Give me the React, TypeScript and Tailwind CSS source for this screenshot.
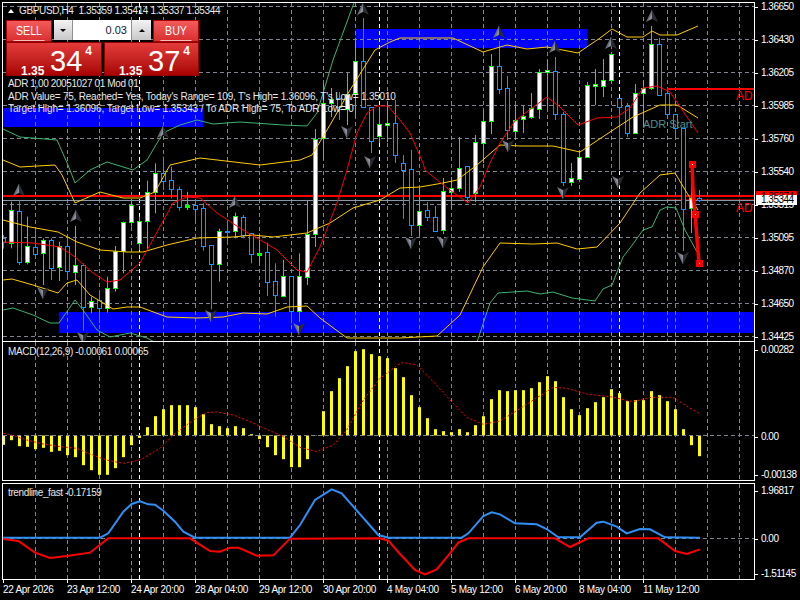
import React from "react";

type C = [number, number, number, number, number];
// [bull=1 / bear=0, wickTop, bodyTop, bodyBottom, wickBottom] in page pixels
const z3 = (v: number) => 170 + v / 3;
const left: C[] = [
  [0,195,205,218,236],[1,95,120,218,235],[0,90,124,278,285],[1,140,229,278,283],[0,178,230,250,265],
  [1,205,210,248,345],[0,205,210,293,330],[1,215,229,293,333],[0,195,229,305,330],[1,168,286,308,345],
  [0,280,286,413,482],[1,380,393,410,430],[0,362,391,416,460],[1,320,355,416,428],[1,228,244,355,365],
  [1,155,157,245,310],[1,88,105,157,170],[1,140,154,220,240],[1,32,67,154,240],[1,-20,10,67,130],
  [0,-40,10,35,60],[0,-10,30,58,85],[0,50,58,112,122],[1,65,105,110,120],[0,90,105,116,158],
  [0,100,115,228,242],[0,225,226,284,418],[1,176,184,284,335],[0,150,184,188,225],[1,128,139,185,205],
  [0,135,142,195,205],[0,190,190,252,280],[1,190,250,255,278],[0,218,246,335,378],[0,280,334,377,440],
  [1,270,319,378,380],[0,318,319,425,460],[1,250,319,425,455],[1,92,192,320,345],
];
const right: C[] = [
  [1,129,139,234,247],[1,83,103,138,160],[1,88,99,103,117],[0,92,98,107,120],[1,73,94,109,125],
  [1,42,61,93,117],[0,18,61,107,108],[0,107,107,141,153],[1,107,124,136,143],[1,103,123,125,142],
  [0,100,123,155,163],[0,155,163,170,219],[0,150,169,225,236],[1,188,211,225,235],[0,202,210,217,221],
  [0,206,217,231,232],[1,178,191,230,234],[1,177,188,192,208],[1,137,168,188,192],[0,166,166,197,202],
  [1,135,142,193,202],[1,111,121,143,163],[1,54,66,121,134],[0,41,66,89,94],[0,76,88,130,140],
  [1,105,120,131,140],[1,106,116,119,133],[1,93,108,117,119],[1,69,72,109,119],[1,60,70,72,108],
  [0,57,71,114,120],[0,112,114,182,186],[1,163,178,182,186],[1,150,157,179,180],[1,82,85,157,158],
  [1,69,84,86,105],[1,59,80,86,97],[1,54,54,80,82],[0,98,98,107,170],[0,103,106,133,137],
  [1,84,93,133,134],[1,80,88,93,127],[1,26,44,88,90],[0,38,44,95,96],[0,90,93,114,115],
  [0,114,114,128,137],[0,128,128,209,251],[1,175,198,208,233],[0,190,198,200,202],
];
const candles: C[] = [
  ...left.map(([t, a, b, c, d]): C => [t, z3(a), z3(b), z3(c), z3(d)]),
  ...right,
];

const macd = [
  -28,-14,-32,-34,-41,-37,-49,-46,-59,-65,-89,-104,-118,-118,-98,-65,-29,-7,25,58,79,91,91,91,85,64,34,28,22,28,22,4,
  -11,-35,-59,-71,-95,-95,-71,1,73,133,172,208,253,259,244,238,232,202,175,121,85,52,19,13,10,19,10,31,58,109,136,133,
  136,136,142,160,178,163,115,79,61,82,100,115,139,127,103,106,106,133,121,103,79,19,-29,-62,
];

const pts = (a: number[][]) => a.map((p) => p.join(",")).join(" ");
const zm = (a: number[][], ox: number, oy: number, off = 0) =>
  a.map(([x, y]) => [(x + off) / 3 + ox, y / 3 + oy]);

const yUp = [[3,160],[20,167],[55,165],[62,175],[75,203],[100,192],[123,198],[140,198],[155,192],[170,165],[200,158],[260,165],[300,160],[312,155],[330,125],[350,90],[375,50],[390,42],[400,38],[453,38],[483,52],[507,45],[527,49],[547,47],[578,53],[600,38],[612,29],[627,37],[643,37],[652,31],[660,35],[677,35],[698,26]];
const yMid = [[3,220],[30,227],[58,232],[77,242],[100,250],[127,252],[143,252],[167,245],[197,238],[233,237],[253,235],[273,237],[307,233],[330,223],[353,208],[380,200],[400,188],[420,187],[443,183],[457,180],[477,165],[500,145],[520,146],[553,146],[580,152],[610,132],[633,117],[660,105],[677,105],[698,118]];
const yLow = [[3,280],[12,279],[33,285],[58,293],[67,283],[77,280],[90,295],[113,309],[127,307],[140,307],[167,317],[197,318],[223,317],[243,313],[267,314],[287,307],[307,306],[320,318],[347,338],[400,338],[437,336],[460,315],[483,267],[500,243],[533,244],[557,243],[577,249],[597,247],[620,223],[640,193],[660,175],[675,173],[687,193],[698,210]];
const gUp = [[3,129],[20,137],[57,140],[68,165],[75,183],[90,170],[107,162],[133,170],[147,160],[163,133],[180,125],[197,120],[213,124],[240,122],[283,125],[307,126],[317,113],[333,60],[355,0]];
const gUp2 = [[572,-2],[578,3],[584,-2]];
const gLow = [[3,310],[13,308],[33,315],[50,323],[59,323],[75,300],[83,310],[97,330],[110,337],[130,333],[147,338],[160,345]];
const gLow2 = [[476,345],[490,303],[498,293],[527,291],[540,294],[553,292],[572,298],[595,301],[603,289],[612,285],[623,257],[630,248],[643,230],[652,227],[660,210],[667,207],[676,208],[685,230],[697,252]];
const red = [[3,242],[33,243],[60,247],[75,257],[93,273],[107,282],[120,280],[140,263],[173,203],[187,197],[200,198],[217,213],[243,230],[257,238],[277,250],[297,270],[307,272],[320,247],[337,203],[347,170],[357,133],[367,113],[377,106],[388,106],[400,120],[410,133],[423,163],[425,170],[447,188],[468,203],[480,187],[490,163],[500,143],[515,121],[532,108],[547,97],[560,107],[578,125],[597,118],[617,117],[630,108],[643,88],[657,86],[670,92],[687,117],[698,133]];

const sigA = [[10,280],[35,285],[80,300],[130,312],[180,320],[230,325],[265,340],[320,360],[370,370],[420,360],[480,325],[520,285],[580,240],[620,218],[650,216],[700,225],[750,245],[800,268],[850,290],[900,322],[950,335],[1000,315],[1040,270],[1090,180],[1140,115],[1200,70]];
const sigB = [[10,68],[50,75],[100,125],[150,180],[200,232],[250,253],[300,243],[350,212],[400,180],[460,142],[500,145],[560,162],[630,170],[700,185],[750,172],[820,172],[870,205],[898,220]];
const signal = [...zm(sigA, 0, 340), ...zm(sigB, 400, 340)];

const blueA = [[10,173],[300,173],[325,160],[370,95],[395,72],[420,64],[445,73],[465,74],[490,92],[525,125],[550,155],[585,173],[870,173],[900,135],[945,60],[995,28],[1025,40],[1135,165],[1165,173]];
const blueB = [[0,173],[185,173],[205,160],[250,108],[275,97],[300,103],[345,130],[410,133],[440,147],[475,172],[540,172],[590,128],[610,125],[650,140],[680,160],[720,147],[750,148],[795,172],[900,173]];
const redA = [[10,177],[55,183],[105,218],[150,234],[200,228],[270,218],[325,175],[570,175],[630,213],[660,215],[690,203],[715,203],[770,227],[820,226],[870,176],[1140,175],[1165,182],[1200,222]];
const redB = [[0,222],[45,270],[75,283],[110,268],[150,220],[175,188],[205,175],[465,175],[510,201],[565,175],[775,175],[825,213],[860,222],[900,208]];

const vx = Array.from({ length: 23 }, (_, i) => 35 + 32 * i);
const whiteX = [139, 379, 619];
const GRID = "#7d8590";

function VGrid({ y1, y2 }: { y1: number; y2: number }) {
  return (
    <g>
      {vx.map((x) => (
        <line key={x} x1={x + 0.5} x2={x + 0.5} y1={y1} y2={y2} stroke={GRID} strokeDasharray="4 3" />
      ))}
      {whiteX.map((x) => (
        <line key={x} x1={x + 0.5} x2={x + 0.5} y1={y1} y2={y2} stroke="#ffffff" strokeDasharray="4 3" />
      ))}
    </g>
  );
}

function UpArrow({ x, y }: { x: number; y: number }) {
  return (
    <g transform={`translate(${x} ${y})`}>
      <polygon points="0,-6.5 -6,6 0,3" fill="#6c7078" />
      <polygon points="0,-6.5 6,6 0,3" fill="#2c2c30" />
      <polygon points="0,-3 -3,4 0,2.5" fill="#8c94a4" />
    </g>
  );
}
function DownArrow({ x, y }: { x: number; y: number }) {
  return (
    <g transform={`translate(${x} ${y})`}>
      <polygon points="0,6.5 -6,-6 0,-3" fill="#6c7078" />
      <polygon points="0,6.5 6,-6 0,-3" fill="#2c2c30" />
      <polygon points="0,3 -3,-4 0,-2.5" fill="#8c94a4" />
    </g>
  );
}

function Marker({ x, y }: { x: number; y: number }) {
  return (
    <g>
      <rect x={x - 3} y={y - 3} width={7} height={7} fill="#ff0000" />
      <rect x={x} y={y} width={1} height={1} fill="#ffffff" />
    </g>
  );
}

function Candle({ k, c }: { k: number; c: C }) {
  const x = 3 + 8 * k;
  const [bull, wt, bt, bb, wb] = c;
  const col = bull ? "#00ff00" : "#1e90ff";
  const thin = bb - bt < 2;
  return (
    <g>
      <line x1={x + 0.5} x2={x + 0.5} y1={wt} y2={wb} stroke={col} />
      <rect
        x={x - 1.5}
        y={Math.round(bt) + 0.5}
        width={4}
        height={Math.max(1, Math.round(bb - bt))}
        fill={thin ? col : bull ? "#ffffff" : "#000000"}
        stroke={col}
      />
    </g>
  );
}

function MainChart() {
  const hy = [6, 39, 72, 105, 138, 171, 204, 237, 270, 303, 336];
  return (
    <svg className="block w-full h-full" viewBox="3 3 751 338">
      <rect x={355} y={29} width={232} height={19} fill="#0000ff" />
      <rect x={3} y={108} width={200} height={19} fill="#0000ff" />
      <rect x={59} y={312} width={695} height={21} fill="#0000ff" />
      {hy.map((y) => (
        <line key={y} x1={3} x2={754} y1={y + 0.5} y2={y + 0.5} stroke={GRID} strokeDasharray="4 3" />
      ))}
      <VGrid y1={3} y2={341} />
      <line x1={667.5} x2={667.5} y1={3} y2={341} stroke={GRID} strokeDasharray="4 3" />
      <line x1={3} x2={754} y1={196} y2={196} stroke="#ff0000" strokeWidth={2} />
      <line x1={3} x2={754} y1={200.5} y2={200.5} stroke="#8a99a8" />
      <line x1={667} x2={754} y1={199.5} y2={199.5} stroke="#ff0000" strokeOpacity={0.55} />
      <line x1={667} x2={754} y1={89} y2={89} stroke="#ff0000" strokeWidth={2} />
      {candles.map((c, k) => (
        <Candle key={k} k={k} c={c} />
      ))}
      <polyline points={pts(gUp)} fill="none" stroke="#3cb371" />
      <polyline points={pts(gUp2)} fill="none" stroke="#3cb371" />
      <polyline points={pts(gLow)} fill="none" stroke="#3cb371" />
      <polyline points={pts(gLow2)} fill="none" stroke="#3cb371" />
      <polyline points={pts(yUp)} fill="none" stroke="#ffcc00" />
      <polyline points={pts(yMid)} fill="none" stroke="#ffcc00" />
      <polyline points={pts(yLow)} fill="none" stroke="#ffcc00" />
      <polyline points={pts(red)} fill="none" stroke="#ff0000" />
      {[[363,9],[163,132],[499,32],[555,47],[611,43],[652,16],[19,190],[76,216],[235,202]].map(([x, y]) => (
        <UpArrow key={`${x}`} x={x} y={y} />
      ))}
      {[[347,132],[370,162],[508,146],[43,293],[211,316],[299,329],[83,338],[411,243],[443,242],[563,193],[618,182],[683,258]].map(([x, y]) => (
        <DownArrow key={`${x}`} x={x} y={y} />
      ))}
      <polyline points="692,164 693,190 695,214 699,263" fill="none" stroke="#ff0000" strokeWidth={3.5} />
      <Marker x={692} y={164} />
      <Marker x={695} y={214} />
      <Marker x={699} y={263} />
    </svg>
  );
}

function MacdChart() {
  return (
    <svg className="block w-full h-full" viewBox="3 342 751 138">
      <VGrid y1={342} y2={480} />
      {macd.map((v, k) => {
        const h = Math.abs(v) / 3;
        return (
          <rect key={k} x={2 + 8 * k} y={v > 0 ? 435.5 - h : 435.5} width={3} height={h} fill="#ffff00" />
        );
      })}
      <line x1={3} x2={754} y1={435.5} y2={435.5} stroke={GRID} strokeDasharray="4 3" />
      <polyline points={pts(signal)} fill="none" stroke="#ff0000" strokeDasharray="2 2" />
    </svg>
  );
}

function TrendChart() {
  const b = [...zm(blueA, 0, 480), ...zm(blueB, 400, 480)];
  const r = [...zm(redA, 0, 480), ...zm(redB, 400, 480)];
  return (
    <svg className="block w-full h-full" viewBox="3 484 751 95">
      <VGrid y1={484} y2={579} />
      <line x1={3} x2={754} y1={538.5} y2={538.5} stroke={GRID} strokeDasharray="4 3" />
      <polyline points={pts(b)} fill="none" stroke="#2f8ff5" strokeWidth={2} />
      <polyline points={pts(r)} fill="none" stroke="#ff0000" strokeWidth={2} />
    </svg>
  );
}

function Price({ big, sup }: { big: string; sup: string }) {
  return (
    <div className="relative flex items-start pl-[14px] text-white">
      <span className="mt-[21px] w-[29px] text-[12px] leading-[14px] font-bold">1.35</span>
      <span className="mt-[1px] text-[29px] leading-[34px]">{big}</span>
      <span className="ml-[3px] mt-[1px] text-[12px] leading-[14px] font-bold">{sup}</span>
    </div>
  );
}

function TopBtn({ label }: { label: string }) {
  return (
    <div className="flex flex-col items-center w-[46px] h-[22px] border border-[#a80000] bg-linear-to-b from-[#f45a5a] to-[#d82e2e] text-white">
      <span className="h-[20px] w-[38px] border-b border-[#f0c0c0] text-center text-[13px] leading-[20px] scale-x-[0.82]">{label}</span>
    </div>
  );
}

function TradePanel() {
  return (
    <div className="absolute left-[3px] top-[17px] w-[193px] flex flex-col">
      <div className="flex h-[22px] justify-between">
        <TopBtn label="SELL" />
        <div className="flex w-[97px] h-[20px] text-[11px] bg-white">
          <div className="flex w-[19px] items-center justify-center border-r border-[#909090] bg-linear-to-b from-[#f4f4f4] to-[#c8c8c8]">
            <span className="w-0 h-0 border-x-[3px] border-x-transparent border-t-[3px] border-t-black" />
          </div>
          <div className="flex-1 pr-[4px] text-right leading-[20px] text-[#10202e]">0.03</div>
          <div className="flex w-[20px] items-center justify-center border-l border-[#909090] bg-linear-to-b from-[#f4f4f4] to-[#c8c8c8]">
            <span className="w-0 h-0 border-x-[3px] border-x-transparent border-b-[3px] border-b-black" />
          </div>
        </div>
        <TopBtn label="BUY" />
      </div>
      <div className="flex h-[34px] gap-[2px]">
        <div className="w-[96px] border border-[#900000] bg-linear-to-b from-[#e43a3a] to-[#a80000]">
          <Price big="34" sup="4" />
        </div>
        <div className="w-[95px] border border-[#900000] bg-linear-to-b from-[#e43a3a] to-[#a80000]">
          <Price big="37" sup="4" />
        </div>
      </div>
    </div>
  );
}

function Axis({ value, gap }: { value: string; gap?: string }) {
  return (
    <div className={`flex items-center h-3 ${gap ?? ""}`}>
      <span className="w-[3px] h-px bg-white" />
      <span className="ml-[3px] text-[10px] tracking-[-0.5px] leading-3 text-white">{value}</span>
    </div>
  );
}

const mainLabels = ["1.36650","1.36430","1.36205","1.35985","1.35760","1.35540","1.35315","1.35095","1.34870","1.34650","1.34425"];
const dates = ["22 Apr 2026","23 Apr 12:00","24 Apr 20:00","28 Apr 04:00","29 Apr 12:00","30 Apr 20:00","4 May 04:00","5 May 12:00","6 May 20:00","8 May 04:00","11 May 12:00"];

export default function App() {
  const txt = "text-[10px] leading-[12.5px] text-[#e8e8e8] whitespace-pre";
  return (
    <div className="w-[800px] h-[600px] bg-black overflow-hidden flex flex-col pl-[2px] pt-[2px] font-['Liberation_Sans',Arial,sans-serif]">
      <div className="flex h-[339px]">
        <div className="relative w-[753px] h-[339px] border border-white border-b-0">
          <MainChart />
          <div className={`absolute left-[5px] top-[2px] flex items-center gap-[5px] ${txt}`}>
            <span className="w-0 h-0 border-x-[3.5px] border-x-transparent border-b-[4px] border-b-white" />
            <span className="tracking-[-0.36px]">GBPUSD,H4  1.35359 1.35414 1.35337 1.35344</span>
          </div>
          <TradePanel />
          <div className={`absolute left-[5px] top-[75px] flex flex-col ${txt}`}>
            <span className="tracking-[-0.38px]">ADR 1,00 20051027 01 Mod 01</span>
            <span className="tracking-[-0.22px]">ADR Value= 75, Reached= Yes, Today's Range= 109, T's High= 1.36096, T's Low= 1.35010</span>
            <span className="tracking-[-0.12px]">Target High= 1.36096, Target Low= 1.35343 / To ADR High= 75, To ADR Low= 0</span>
          </div>
          <span className="absolute left-[640px] top-[114px] text-[11px] leading-[14px] text-[#4f8f8a]">ADR Start</span>
          <div className="absolute right-0 top-[86px] w-[18px] overflow-hidden text-[12px] leading-[14px] text-[#ff0000]">ADR</div>
          <div className="absolute right-0 top-[198px] w-[18px] overflow-hidden text-[12px] leading-[14px] text-[#ff0000]">ADR</div>
        </div>
        <div className="relative -mt-[1px] flex flex-col gap-[21px] h-[340px]">
          {mainLabels.map((l) => (
            <Axis key={l} value={l} />
          ))}
          <div className="absolute left-[1px] top-[190px] w-[41px] h-[14px] flex flex-col">
            <span className="h-[4px] bg-[#ff0000] overflow-hidden pl-[5px] text-[10px] tracking-[-0.5px] leading-3 text-black">1.35374</span>
            <span className="h-[10px] bg-white pl-[5px] text-[10px] tracking-[-0.5px] leading-[10px] text-black">1.35344</span>
          </div>
        </div>
      </div>

      <div className="flex h-[140px]">
        <div className="relative w-[753px] h-[140px] border border-white">
          <MacdChart />
          <span className={`absolute left-[5px] top-[4px] tracking-[-0.35px] ${txt}`}>MACD(12,26,9) -0.00061 0.00065</span>
        </div>
        <div className="flex flex-col pt-[3px]">
          <Axis value="0.00282" gap="mb-[75px]" />
          <Axis value="0.00" gap="mb-[26px]" />
          <Axis value="-0.00138" />
        </div>
      </div>

      <div className="flex h-[97px] mt-[2px]">
        <div className="relative w-[753px] h-[97px] border border-white">
          <TrendChart />
          <span className={`absolute left-[5px] top-[3px] tracking-[-0.38px] ${txt}`}>trendline_fast -0.17159</span>
        </div>
        <div className="flex flex-col pt-[2px]">
          <Axis value="1.96817" gap="mb-[36px]" />
          <Axis value="0.00" gap="mb-[23px]" />
          <Axis value="-1.51145" />
        </div>
      </div>

      <div className="flex pl-px">
        {dates.map((d) => (
          <div key={d} className="w-16 h-[19px] flex flex-col">
            <span className="w-px h-[3px] bg-white" />
            <span className="mt-[1px] text-[10px] tracking-[-0.3px] leading-3 text-white whitespace-pre">{d}</span>
          </div>
        ))}
      </div>
    </div>
  );
}
